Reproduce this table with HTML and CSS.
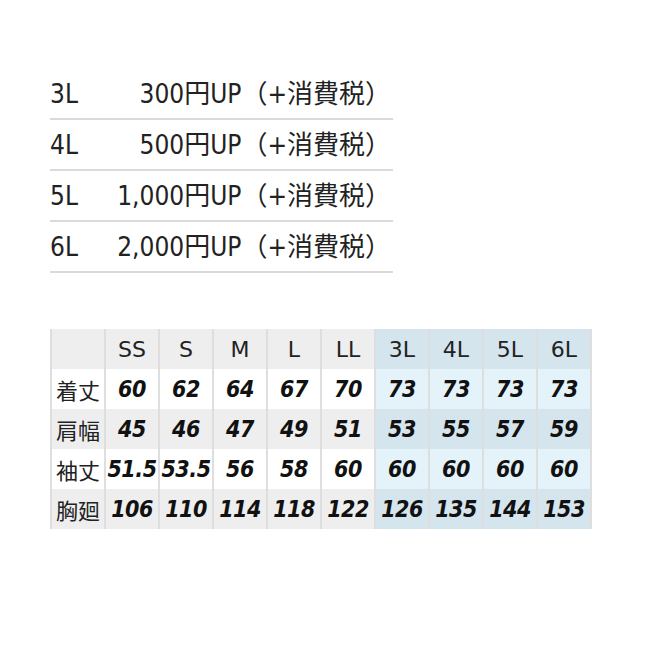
FILE: index.html
```html
<!DOCTYPE html>
<html lang="ja">
<head>
<meta charset="utf-8">
<link rel="stylesheet" href="styles.css">
</head>
<body>
<div class="page">
  <div class="price-list">
    <div class="row"><span class="size">3L</span><span class="price">300円UP（+消費税）</span></div>
    <div class="row"><span class="size">4L</span><span class="price">500円UP（+消費税）</span></div>
    <div class="row"><span class="size">5L</span><span class="price">1,000円UP（+消費税）</span></div>
    <div class="row"><span class="size">6L</span><span class="price">2,000円UP（+消費税）</span></div>
  </div>

  <table class="sizes">
    <thead>
      <tr>
        <th class="label"></th>
        <th>SS</th><th>S</th><th>M</th><th>L</th><th>LL</th>
        <th class="big">3L</th><th class="big">4L</th><th class="big">5L</th><th class="big">6L</th>
      </tr>
    </thead>
    <tbody>
      <tr class="odd">
        <th class="label">着丈</th>
        <td>60</td><td>62</td><td>64</td><td>67</td><td>70</td>
        <td class="big">73</td><td class="big">73</td><td class="big">73</td><td class="big">73</td>
      </tr>
      <tr class="even">
        <th class="label">肩幅</th>
        <td>45</td><td>46</td><td>47</td><td>49</td><td>51</td>
        <td class="big">53</td><td class="big">55</td><td class="big">57</td><td class="big">59</td>
      </tr>
      <tr class="odd">
        <th class="label">袖丈</th>
        <td>51.5</td><td>53.5</td><td>56</td><td>58</td><td>60</td>
        <td class="big">60</td><td class="big">60</td><td class="big">60</td><td class="big">60</td>
      </tr>
      <tr class="even">
        <th class="label">胸廻</th>
        <td>106</td><td>110</td><td>114</td><td>118</td><td>122</td>
        <td class="big">126</td><td class="big">135</td><td class="big">144</td><td class="big">153</td>
      </tr>
    </tbody>
  </table>
</div>
</body>
</html>
```

FILE: styles.css
```css
html, body {
  margin: 0;
  padding: 0;
  background: #ffffff;
}

body {
  font-family: "DejaVu Sans", "Noto Sans CJK JP", sans-serif;
  color: #222222;
}

.page {
  padding: 69px 0 0 50px;
}

.price-list {
  width: 343px;
}

.row {
  display: flex;
  align-items: baseline;
  box-sizing: border-box;
  height: 51px;
  padding-top: 10px;
  border-bottom: 2px solid #dadada;
  font-family: "DejaVu Sans Condensed", "DejaVu Sans", "Noto Sans CJK JP", sans-serif;
  font-stretch: condensed;
  font-size: 26px;
  line-height: 30px;
}

.size {
  width: 60px;
}

.price {
  flex: 1;
  text-align: right;
  padding-right: 2px;
  white-space: nowrap;
}

.sizes {
  margin-top: 56px;
  border-collapse: collapse;
  table-layout: fixed;
  width: 540px;
}

.sizes th,
.sizes td {
  width: 54px;
  height: 40px;
  padding: 0;
  text-align: center;
  border-left: 2px solid #dedede;
  border-right: 2px solid #dedede;
  box-sizing: border-box;
  white-space: nowrap;
}

.sizes thead th {
  background: #eeeeee;
  font-weight: normal;
  font-size: 22px;
  color: #222222;
}

.sizes thead th.big {
  background: #d5e5ee;
}

.sizes th.label {
  font-family: "Noto Sans CJK JP", sans-serif;
  font-weight: normal;
  font-size: 22px;
  color: #222222;
}

.sizes td {
  font-family: "DejaVu Sans Condensed", "DejaVu Sans", sans-serif;
  font-stretch: condensed;
  font-weight: bold;
  font-style: italic;
  font-size: 23px;
  color: #111111;
  letter-spacing: -0.5px;
}

.sizes tr.odd th,
.sizes tr.odd td {
  background: #ffffff;
}

.sizes tr.odd td.big {
  background: #e4f2fa;
}

.sizes tr.even th,
.sizes tr.even td {
  background: #eeeeee;
}

.sizes tr.even td.big {
  background: #d5e5ee;
}
```
